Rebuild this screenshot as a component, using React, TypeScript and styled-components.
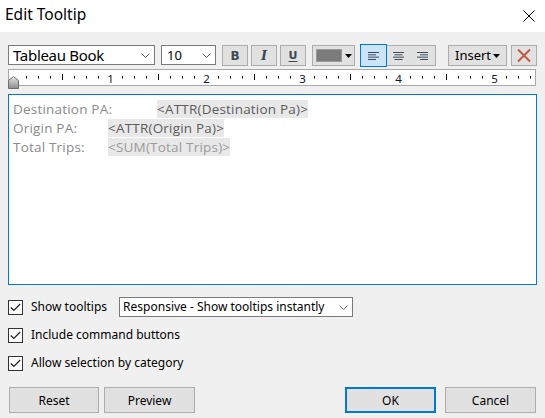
import React from "react";
import styled, { createGlobalStyle, css } from "styled-components";

const Global = createGlobalStyle`
  html, body { margin: 0; padding: 0; background: #f0f0f0; }
  body { width: 545px; height: 418px; overflow: hidden; font-family: "Noto Sans", "Liberation Sans", sans-serif; }
  * { box-sizing: border-box; }
`;

const Dialog = styled.div`
  width: 545px;
  height: 418px;
  display: flex;
  flex-direction: column;
  background: #f0f0f0;
`;

const TitleBar = styled.div`
  height: 32px;
  background: #ffffff;
  display: flex;
  align-items: center;
  justify-content: space-between;
  padding: 0 10px 0 5px;
`;

const Title = styled.div`
  font-size: 15.5px;
  color: #000;
  line-height: 1;
  margin-top: -2px;
`;

const Body = styled.div`
  display: flex;
  flex-direction: column;
  padding: 0 8px;
`;

const Toolbar = styled.div`
  margin-top: 13px;
  height: 21px;
  display: flex;
  align-items: flex-start;
`;

const Select = styled.div<{ $w: number; $ml?: number; $fs: number; $pl: number }>`
  width: ${(p) => p.$w}px;
  height: 20px;
  margin-left: ${(p) => p.$ml ?? 0}px;
  background: #fff;
  border: 1px solid #7a7a7a;
  display: flex;
  align-items: center;
  justify-content: space-between;
  padding: 0 4px 0 ${(p) => p.$pl}px;
  font-size: ${(p) => p.$fs}px;
  color: #000;
  white-space: nowrap;
`;

const SelectText = styled.span<{ $ls?: number }>`
  letter-spacing: ${(p) => p.$ls ?? 0}px;
  line-height: 1;
`;

const ToolButton = styled.div<{ $w: number; $ml: number }>`
  width: ${(p) => p.$w}px;
  height: 21px;
  margin-left: ${(p) => p.$ml}px;
  background: #e1e1e1;
  border: 1px solid #adadad;
  display: flex;
  align-items: center;
  justify-content: center;
  color: #3e4853;
`;

const Glyph = styled.span<{ $kind: "b" | "i" | "u" }>`
  line-height: 1;
  ${(p) =>
    p.$kind === "b" &&
    css`
      font-family: "DejaVu Sans", sans-serif;
      font-weight: bold;
      font-size: 12px;
    `}
  ${(p) =>
    p.$kind === "i" &&
    css`
      font-family: "DejaVu Serif", serif;
      font-style: italic;
      font-weight: bold;
      font-size: 13px;
    `}
  ${(p) =>
    p.$kind === "u" &&
    css`
      font-family: "DejaVu Sans", sans-serif;
      font-weight: bold;
      font-size: 11px;
      text-decoration: underline;
      text-underline-offset: 2px;
    `}
`;

const Swatch = styled.div`
  width: 26px;
  height: 13px;
  background: #7b7b7b;
  border: 1px solid #9a9a9a;
  margin-right: 3px;
`;

const AlignGroup = styled.div`
  width: 75px;
  height: 21px;
  margin-left: 6px;
  border: 1px solid #adadad;
  background: #e1e1e1;
  display: flex;
`;

const AlignSeg = styled.div<{ $active?: boolean }>`
  flex: 1;
  display: flex;
  align-items: center;
  justify-content: center;
  ${(p) =>
    p.$active &&
    css`
      background: #cce4f7;
      outline: 1px solid #0078d7;
      outline-offset: 0;
      margin: -1px 0 -1px -1px;
      flex: 0 0 25px;
    `}
`;

const InsertText = styled.span`
  font-size: 13px;
  color: #000;
  line-height: 1;
  margin-right: 2px;
  margin-top: -1px;
`;

const Ruler = styled.div`
  margin-top: 3px;
  width: 528px;
  height: 17px;
  background: #fff;
  border: 1px solid #a8a8a8;
  position: relative;
`;

const RulerSvg = styled.svg`
  display: block;
  overflow: visible;
`;

const Marker = styled.svg`
  position: absolute;
  left: -1px;
  top: 6px;
`;

const Editor = styled.div`
  margin-top: 8px;
  width: 529px;
  height: 191px;
  background: #fff;
  border: 1px solid #0078d7;
  padding: 5px 4px;
  font-family: "Open Sans", "Noto Sans", sans-serif;
  font-size: 13.5px;
  letter-spacing: 0.2px;
  line-height: 19px;
`;

const Line = styled.div`
  white-space: nowrap;
`;

const FieldLabel = styled.span<{ $w: number }>`
  display: inline-block;
  width: ${(p) => p.$w}px;
  color: #8a8a8a;
`;

const FieldValue = styled.span<{ $dim?: boolean }>`
  background: #e8e8e8;
  color: ${(p) => (p.$dim ? "#9a9a9a" : "#5c5c5c")};
`;

const Options = styled.div`
  margin-top: 12px;
  display: flex;
  flex-direction: column;
  gap: 8px;
`;

const OptionRow = styled.div`
  height: 20px;
  display: flex;
  align-items: center;
`;

const Check = styled.div`
  width: 15px;
  height: 15px;
  background: #fff;
  border: 1px solid #333;
  display: flex;
  align-items: center;
  justify-content: center;
`;

const OptionLabel = styled.span`
  margin-left: 8px;
  font-size: 12px;
  color: #000;
  line-height: 1;
`;

const Buttons = styled.div`
  margin-top: 14px;
  display: flex;
  justify-content: space-between;
  padding: 0 1px 0 1px;
`;

const ButtonGroup = styled.div`
  display: flex;
`;

const Button = styled.div<{ $w: number; $ml?: number; $primary?: boolean }>`
  width: ${(p) => p.$w}px;
  height: 26px;
  margin-left: ${(p) => p.$ml ?? 0}px;
  background: #e1e1e1;
  border: ${(p) => (p.$primary ? "2px solid #0078d7" : "1px solid #adadad")};
  display: flex;
  align-items: center;
  justify-content: center;
  font-size: 12px;
  color: #000;
`;

const Chevron = () => (
  <svg width="9" height="5" viewBox="0 0 9 5">
    <polyline points="0.5,0.5 4.5,4.5 8.5,0.5" fill="none" stroke="#6a6a6a" strokeWidth="1" />
  </svg>
);

const Caret = () => (
  <svg width="7" height="4" viewBox="0 0 7 4">
    <polygon points="0,0 7,0 3.5,4" fill="#000" />
  </svg>
);

const AlignIcon = ({ mode }: { mode: "l" | "c" | "r" }) => {
  const lens = [11, 8, 11, 8];
  return (
    <svg width="11" height="8" viewBox="0 0 11 8">
      {lens.map((len, i) => {
        const x = mode === "l" ? 0 : mode === "c" ? (11 - len) / 2 : 11 - len;
        const y = 0.5 + i * 2.33;
        return <line key={i} x1={x} x2={x + len} y1={y} y2={y} stroke="#3d4a5a" strokeWidth="1" />;
      })}
    </svg>
  );
};

const CheckMark = () => (
  <svg width="11" height="9" viewBox="0 0 11 9">
    <polyline points="0.8,4.5 3.8,7.5 10.2,1" fill="none" stroke="#222" strokeWidth="1.2" />
  </svg>
);

const RulerMarks = () => {
  const ticks: React.ReactNode[] = [];
  for (let k = 1; k <= 43; k++) {
    const x = 5.5 + k * 12;
    if (k % 8 === 0) {
      ticks.push(
        <text key={k} x={x} y={13} fontSize="11.5" textAnchor="middle" fill="#14142e" fontFamily="Noto Sans, sans-serif">
          {k / 8}
        </text>
      );
    } else if (k % 4 === 0) {
      ticks.push(<line key={k} x1={x} x2={x} y1={4} y2={10} stroke="#000" strokeWidth="1" />);
    } else {
      ticks.push(<line key={k} x1={x} x2={x} y1={6} y2={8.5} stroke="#000" strokeWidth="1" />);
    }
  }
  return (
    <RulerSvg width="526" height="15" viewBox="0 0 526 15">
      {ticks}
    </RulerSvg>
  );
};

export default function App() {
  return (
    <>
      <Global />
      <Dialog>
        <TitleBar>
          <Title>Edit Tooltip</Title>
          <svg width="12" height="12" viewBox="0 0 12 12">
            <line x1="0.5" y1="0.5" x2="11.5" y2="11.5" stroke="#000" strokeWidth="1" />
            <line x1="11.5" y1="0.5" x2="0.5" y2="11.5" stroke="#000" strokeWidth="1" />
          </svg>
        </TitleBar>
        <Body>
          <Toolbar>
            <Select $w={147} $fs={15} $pl={4}>
              <SelectText $ls={-0.3}>Tableau Book</SelectText>
              <Chevron />
            </Select>
            <Select $w={55} $ml={6} $fs={13} $pl={5}>
              <SelectText>10</SelectText>
              <Chevron />
            </Select>
            <ToolButton $w={26} $ml={6}>
              <Glyph $kind="b">B</Glyph>
            </ToolButton>
            <ToolButton $w={26} $ml={3}>
              <Glyph $kind="i">I</Glyph>
            </ToolButton>
            <ToolButton $w={26} $ml={3}>
              <Glyph $kind="u">U</Glyph>
            </ToolButton>
            <ToolButton $w={43} $ml={6}>
              <Swatch />
              <Caret />
            </ToolButton>
            <AlignGroup>
              <AlignSeg $active>
                <AlignIcon mode="l" />
              </AlignSeg>
              <AlignSeg>
                <AlignIcon mode="c" />
              </AlignSeg>
              <AlignSeg>
                <AlignIcon mode="r" />
              </AlignSeg>
            </AlignGroup>
            <ToolButton $w={59} $ml={12}>
              <InsertText>Insert</InsertText>
              <Caret />
            </ToolButton>
            <ToolButton $w={26} $ml={4}>
              <svg width="14" height="13" viewBox="0 0 14 13">
                <line x1="1" y1="0.5" x2="13" y2="12.5" stroke="#c25a40" strokeWidth="2" />
                <line x1="13" y1="0.5" x2="1" y2="12.5" stroke="#c25a40" strokeWidth="2" />
              </svg>
            </ToolButton>
          </Toolbar>
          <Ruler>
            <RulerMarks />
            <Marker width="11" height="13" viewBox="0 0 11 13">
              <defs>
                <linearGradient id="mk" x1="0" y1="0" x2="0" y2="1">
                  <stop offset="0" stopColor="#e6e6e6" />
                  <stop offset="1" stopColor="#8c8c8c" />
                </linearGradient>
              </defs>
              <polygon points="0.5,12.5 0.5,4.5 5.5,0.5 10.5,4.5 10.5,12.5" fill="url(#mk)" stroke="#6d6d6d" strokeWidth="1" />
            </Marker>
          </Ruler>
          <Editor>
            <Line>
              <FieldLabel $w={144}>Destination PA:</FieldLabel>
              <FieldValue>&lt;ATTR(Destination Pa)&gt;</FieldValue>
            </Line>
            <Line>
              <FieldLabel $w={95}>Origin PA:</FieldLabel>
              <FieldValue>&lt;ATTR(Origin Pa)&gt;</FieldValue>
            </Line>
            <Line>
              <FieldLabel $w={95}>Total Trips:</FieldLabel>
              <FieldValue $dim>&lt;SUM(Total Trips)&gt;</FieldValue>
            </Line>
          </Editor>
          <Options>
            <OptionRow>
              <Check>
                <CheckMark />
              </Check>
              <OptionLabel>Show tooltips</OptionLabel>
              <Select $w={234} $ml={12} $fs={12} $pl={3}>
                <SelectText>Responsive - Show tooltips instantly</SelectText>
                <Chevron />
              </Select>
            </OptionRow>
            <OptionRow>
              <Check>
                <CheckMark />
              </Check>
              <OptionLabel>Include command buttons</OptionLabel>
            </OptionRow>
            <OptionRow>
              <Check>
                <CheckMark />
              </Check>
              <OptionLabel>Allow selection by category</OptionLabel>
            </OptionRow>
          </Options>
          <Buttons>
            <ButtonGroup>
              <Button $w={90}>Reset</Button>
              <Button $w={91} $ml={5}>Preview</Button>
            </ButtonGroup>
            <ButtonGroup>
              <Button $w={91} $primary>OK</Button>
              <Button $w={91} $ml={9}>Cancel</Button>
            </ButtonGroup>
          </Buttons>
        </Body>
      </Dialog>
    </>
  );
}
